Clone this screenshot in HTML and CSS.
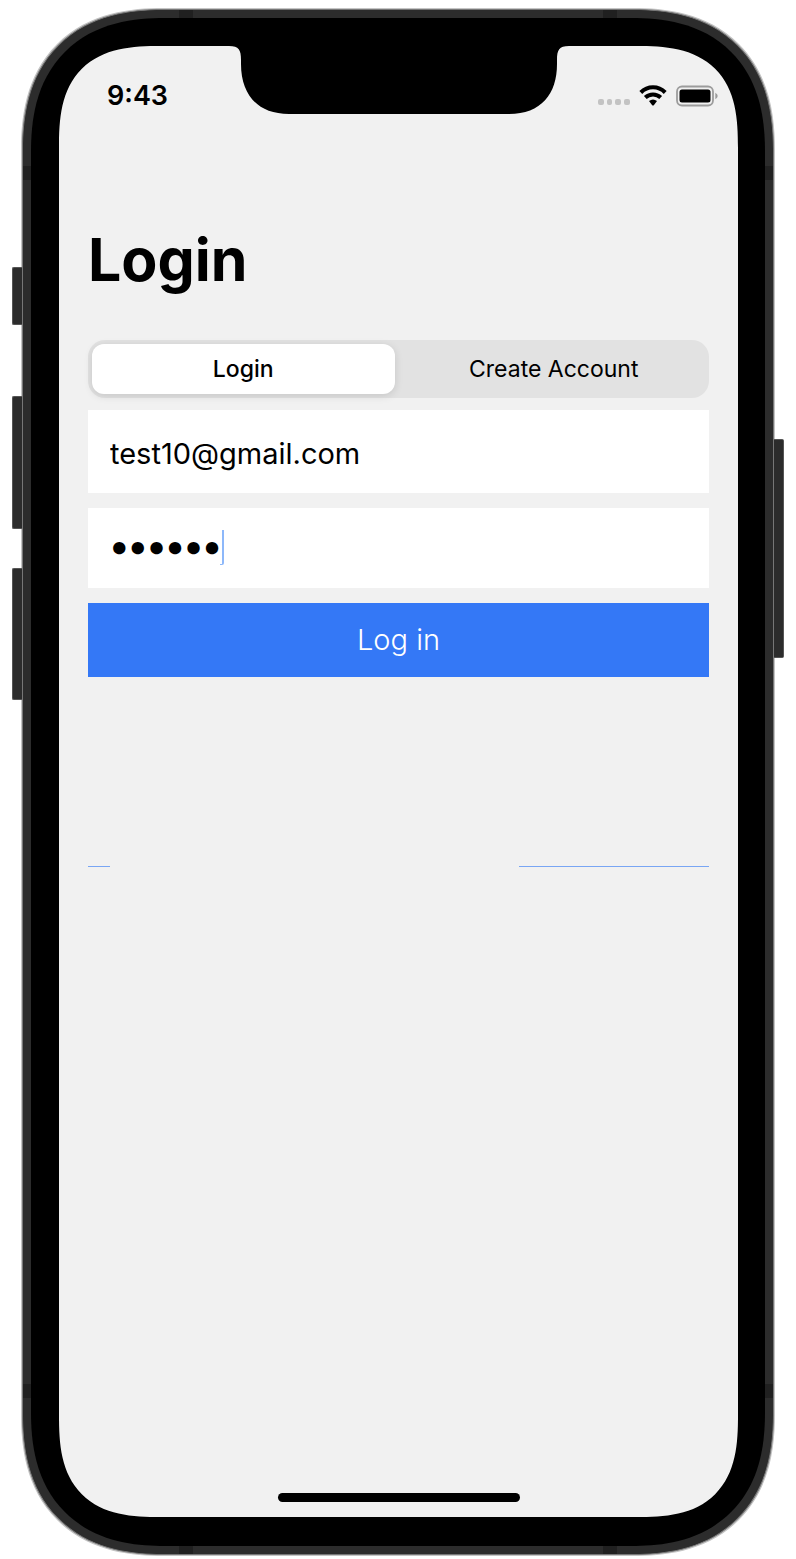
FILE: index.html
```html
<!DOCTYPE html>
<html lang="en">
<head>
<meta charset="utf-8">
<meta name="viewport" content="width=device-width, initial-scale=1">
<title>Login</title>
<link rel="stylesheet" href="styles.css">
</head>
<body>
<div class="phone">
  <span class="key key-mute"></span>
  <span class="key key-up"></span>
  <span class="key key-down"></span>
  <span class="key key-power"></span>
  <span class="band band-top band-left"></span>
  <span class="band band-top band-right"></span>
  <span class="band band-bottom band-left"></span>
  <span class="band band-bottom band-right"></span>
  <span class="band-side band-high band-start"></span>
  <span class="band-side band-high band-end"></span>
  <span class="band-side band-low band-start"></span>
  <span class="band-side band-low band-end"></span>
  <div class="bezel">
    <div class="screen">
      <svg class="notch" viewBox="0 0 340 69" aria-hidden="true"><path d="M0 0C10 0 12 4 12 14V18C12 48 28 68 60 68H280C312 68 328 48 328 18V14C328 4 330 0 340 0V-1H0Z"/></svg>
      <header class="status">
        <time class="clock">9:43</time>
        <div class="indicators">
          <svg width="32" height="22" viewBox="0 0 32 22" aria-hidden="true"><g fill="#c3c3c3"><rect x="0" y="14" width="6" height="6" rx="2"/><rect x="9" y="14" width="5" height="6" rx="2"/><rect x="17" y="14" width="6" height="6" rx="2"/><rect x="26" y="14" width="6" height="6" rx="2"/></g></svg>
          <svg width="28" height="22" viewBox="0 0 28 22" aria-hidden="true"><g fill="none" stroke="#000" stroke-width="4"><path d="M1.800 7.500C8.600 .6 19.400 .6 26.200 7.500"/><path d="M6.300 12.500C10.600 8.400 17.400 8.400 21.700 12.500"/></g><path d="M10 16Q14 12.800 18 16L15 19.900Q14 21 13 19.900Z"/></svg>
          <svg width="42" height="22" viewBox="0 0 42 22" aria-hidden="true"><rect x="1" y="1.500" width="36" height="19" rx="5" fill="none" stroke="#9c9c9c" stroke-width="1.800"/><rect x="3.500" y="4.500" width="31" height="13" rx="2.500"/><path d="M39.300 7.800Q41.700 9 41.700 11T39.300 14.200Z" fill="#9c9c9c"/></svg>
        </div>
      </header>
      <main class="content">
        <h1 class="title">Login</h1>
        <form class="form">
          <div class="segments" role="radiogroup" aria-label="Mode">
            <label class="segment"><input class="segment-input" type="radio" name="mode" checked><span class="segment-text">Login</span></label>
            <label class="segment"><input class="segment-input" type="radio" name="mode"><span class="segment-text">Create Account</span></label>
          </div>
          <input class="field field-email" type="email" aria-label="Email" value="test10@gmail.com">
          <div class="password">
            <input class="field field-password" type="password" aria-label="Password" value="secret">
            <span class="caret"></span>
          </div>
          <button class="submit" type="button">Log in</button>
        </form>
        <div class="rules"><span class="rule rule-short"></span><span class="rule rule-long"></span></div>
      </main>
      <div class="home"></div>
    </div>
  </div>
</div>
</body>
</html>
```
FILE: styles.css
```css
* { box-sizing: border-box; }
body {
  margin: 0;
  padding: 9px 22px 4px;
  min-height: 100vh;
  display: flex;
  background: #fff;
  color: #000;
  font-family: Inter, "Liberation Sans", sans-serif;
}
.phone {
  position: relative;
  flex: 1;
  display: flex;
  padding: 8px;
  background: #2c2c2c;
  border: 1px solid #777;
  border-radius: 124px;
  box-shadow: 0 0 0 1px #c4c4c4;
}
.bezel {
  flex: 1;
  display: flex;
  padding: 28px 27px 29px 28px;
  background: #000;
  border-radius: 116px;
}
.screen {
  position: relative;
  flex: 1;
  display: flex;
  flex-direction: column;
  background: #f1f1f1;
  border-radius: 90px;
}
@supports (corner-shape: superellipse(1.2)) {
  .phone { border-radius: 142px; corner-shape: superellipse(1.25); }
  .bezel { border-radius: 134px; corner-shape: superellipse(1.25); }
  .screen { border-radius: 102px; corner-shape: superellipse(1.45); }
}
.key {
  position: absolute;
  left: -11px;
  width: 10px;
  background: #2c2c2c;
  border: 1px solid #555;
  border-right: 0;
  border-radius: 2px 0 0 2px;
}
.key-mute { top: 257px; height: 58px; }
.key-up { top: 386px; height: 133px; }
.key-down { top: 558px; height: 132px; }
.key-power {
  top: 429px;
  left: auto;
  right: -11px;
  height: 219px;
  border-right: 1px solid #555;
  border-left: 0;
  border-radius: 0 2px 2px 0;
}
.band, .band-side { position: absolute; background: #202020; }
.band { width: 14px; height: 8px; }
.band-side { width: 8px; height: 14px; }
.band-top { top: 0; }
.band-bottom { bottom: 0; }
.band-left { left: 156px; }
.band-right { right: 156px; }
.band-high { top: 156px; }
.band-low { bottom: 156px; }
.band-start { left: 0; }
.band-end { right: 0; }
.notch {
  position: absolute;
  top: 0;
  left: 50%;
  width: 340px;
  height: 69px;
  transform: translateX(-50%);
  overflow: visible;
}
.status {
  display: flex;
  justify-content: space-between;
  align-items: center;
  height: 100px;
  padding: 0 20px 0 48px;
}
.clock { font-size: 27px; font-weight: 600; line-height: 32px; }
.indicators { display: flex; align-items: center; gap: 9px; }
.content { flex: 1; padding: 78px 29px 0; }
.title { margin: 0; font-size: 59px; font-weight: 700; line-height: 72px; }
.form { display: flex; flex-direction: column; margin-top: 44px; }
.segments {
  display: grid;
  grid-template-columns: 1fr 1fr;
  gap: 8px;
  height: 58px;
  padding: 4px;
  background: #e2e2e2;
  border-radius: 17px;
}
.segment { position: relative; display: flex; font-size: 23px; line-height: 28px; }
.segment-input { position: absolute; inset: 0; margin: 0; opacity: 0; }
.segment-text {
  flex: 1;
  display: flex;
  align-items: center;
  justify-content: center;
  border-radius: 12px;
}
.segment-input:checked + .segment-text {
  background: #fff;
  font-weight: 500;
  box-shadow: 0 2px 8px rgba(0, 0, 0, .12);
}
.field {
  display: block;
  width: 100%;
  padding: 0 22px;
  border: 0;
  border-radius: 0;
  outline: 0;
  background: #fff;
  color: #000;
  font: 400 29px/36px Inter, "Liberation Sans", sans-serif;
}
.field-email { height: 83px; margin-top: 12px; padding-top: 3px; }
.password { position: relative; margin-top: 15px; }
.field-password {
  height: 80px;
  padding-bottom: 5px;
  font-size: 33px;
  -webkit-text-stroke: 2px #000;
}
.caret {
  position: absolute;
  top: 22px;
  left: 132px;
  width: 4px;
  height: 35px;
  border-right: 2px solid #8db8fa;
  border-bottom: 1px solid #8db8fa;
  border-bottom-right-radius: 2px;
}
.submit {
  height: 74px;
  margin-top: 15px;
  padding: 0;
  border: 0;
  background: #3478f6;
  color: #fff;
  font: 300 29px/36px Inter, "Liberation Sans", sans-serif;
}
.rules { display: flex; justify-content: space-between; margin-top: 189px; }
.rule { height: 1px; background: #79a6f4; }
.rule-short { width: 22px; }
.rule-long { width: 190px; }
.home {
  width: 242px;
  height: 9px;
  margin: 0 auto 15px;
  border-radius: 5px;
  background: #000;
}
```
